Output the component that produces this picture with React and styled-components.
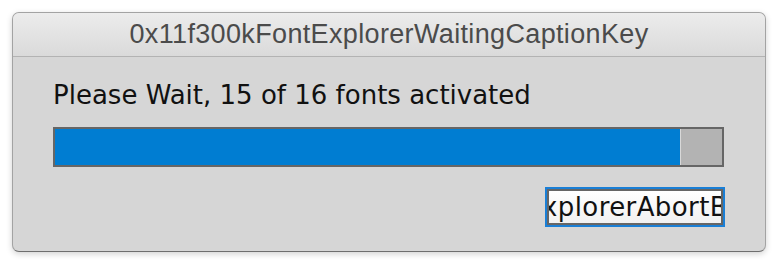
import React from 'react';
import styled, { createGlobalStyle } from 'styled-components';

const Global = createGlobalStyle`
  html, body {
    margin: 0;
    padding: 0;
    background: #ffffff;
  }
`;

const Page = styled.div`
  padding: 12px 12px 0 12px;
  width: 778px;
  height: 264px;
  box-sizing: border-box;
`;

const Window = styled.div`
  width: 754px;
  height: 240px;
  box-sizing: border-box;
  border: 1px solid #a3a3a3;
  border-bottom-color: #6e6e6e;
  border-radius: 7px;
  background: #d6d6d6;
  box-shadow: 0 2px 6px rgba(0, 0, 0, 0.18);
  overflow: hidden;
  display: flex;
  flex-direction: column;
`;

const TitleBar = styled.div`
  height: 43px;
  flex: none;
  border-bottom: 1px solid #b3b3b3;
  background: linear-gradient(#ececec, #dadada);
  display: flex;
  align-items: center;
  justify-content: center;
  font-family: "Liberation Sans", Arial, sans-serif;
  font-size: 27px;
  color: #4b4b4b;
  letter-spacing: 0.35px;
`;

const Content = styled.div`
  flex: 1;
  padding: 23px 40px 0 40px;
  display: flex;
  flex-direction: column;
`;

const Label = styled.div`
  font-family: "DejaVu Sans", Verdana, sans-serif;
  font-size: 26px;
  line-height: 30px;
  color: #111111;
  margin-bottom: 17px;
`;

const Track = styled.div`
  height: 40px;
  box-sizing: border-box;
  border: 2px solid #666666;
  background: #b3b3b3;
  display: flex;
  margin-right: 1px;
`;

const Fill = styled.div`
  background: #007dd2;
  border-right: 1px solid #d8d8d8;
`;

const Actions = styled.div`
  display: flex;
  justify-content: flex-end;
  margin-top: 20px;
`;

const Ring = styled.div`
  border: 2px solid #1a7fd6;
  display: flex;
`;

const Button = styled.button`
  width: 176px;
  height: 36px;
  box-sizing: border-box;
  padding: 0;
  border: 2px solid #666666;
  border-radius: 0;
  outline: none;
  background: linear-gradient(#ffffff, #f1f1f1);
  display: flex;
  align-items: center;
  justify-content: center;
  overflow: hidden;
  font-family: "DejaVu Sans", Verdana, sans-serif;
  font-size: 26px;
  letter-spacing: 0.4px;
  color: #111111;
  white-space: nowrap;
`;

const ButtonText = styled.span`
  flex: none;
`;

export default function App() {
  const done = 15;
  const total = 16;
  return (
    <Page>
      <Global />
      <Window>
        <TitleBar>0x11f300kFontExplorerWaitingCaptionKey</TitleBar>
        <Content>
          <Label>Please Wait, {done} of {total} fonts activated</Label>
          <Track>
            <Fill style={{ width: `${(done / total) * 100}%` }} />
          </Track>
          <Actions>
            <Ring>
              <Button>
                <ButtonText>xplorerAbortB</ButtonText>
              </Button>
            </Ring>
          </Actions>
        </Content>
      </Window>
    </Page>
  );
}
